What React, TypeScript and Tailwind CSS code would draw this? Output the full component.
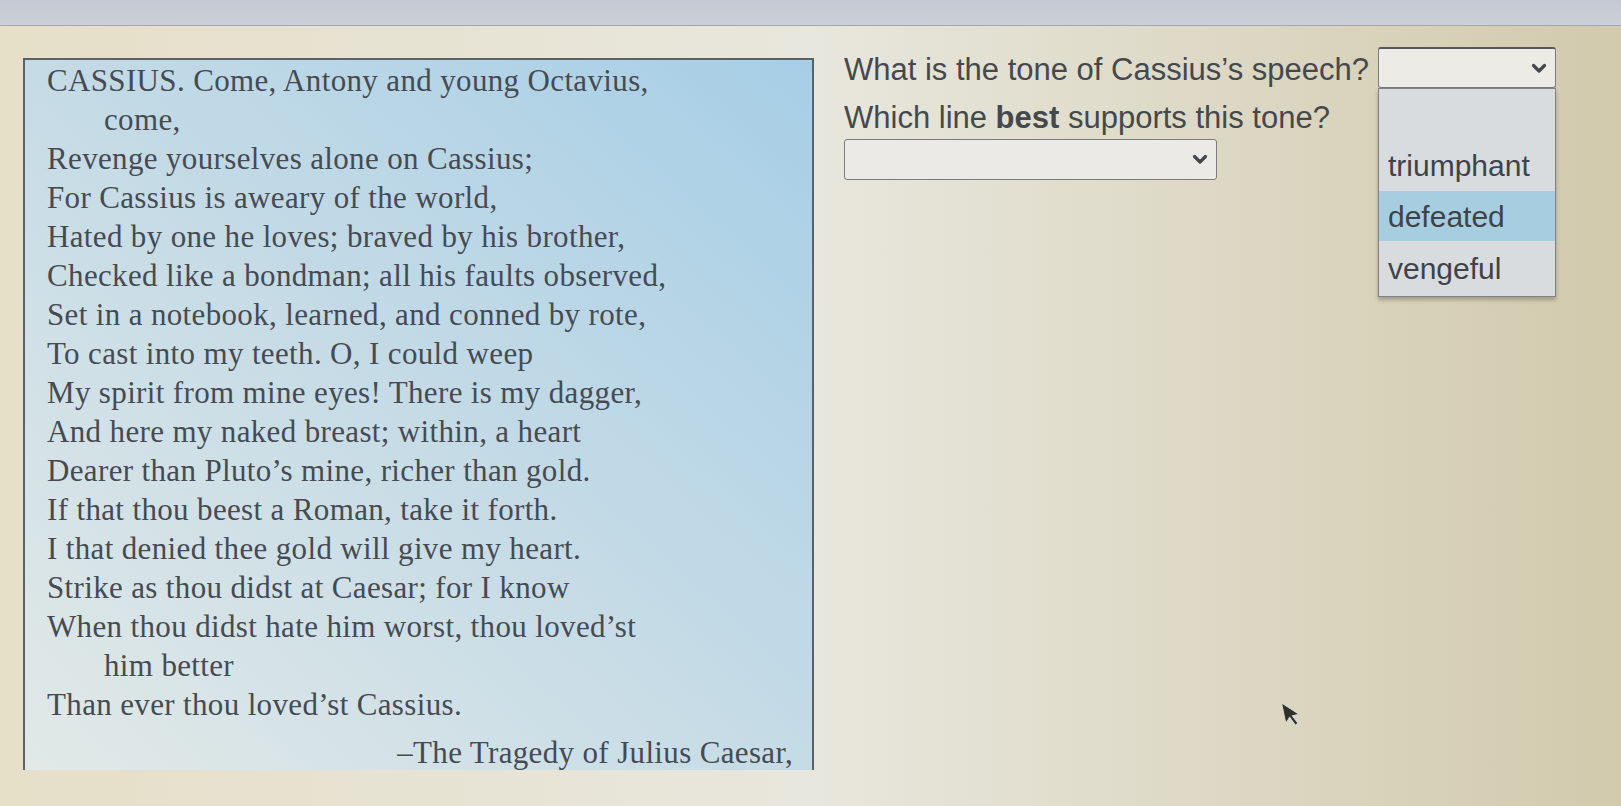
import React from "react";

const LINES: { text: string; indent?: boolean }[] = [
  { text: "CASSIUS. Come, Antony and young Octavius," },
  { text: "come,", indent: true },
  { text: "Revenge yourselves alone on Cassius;" },
  { text: "For Cassius is aweary of the world," },
  { text: "Hated by one he loves; braved by his brother," },
  { text: "Checked like a bondman; all his faults observed," },
  { text: "Set in a notebook, learned, and conned by rote," },
  { text: "To cast into my teeth. O, I could weep" },
  { text: "My spirit from mine eyes! There is my dagger," },
  { text: "And here my naked breast; within, a heart" },
  { text: "Dearer than Pluto’s mine, richer than gold." },
  { text: "If that thou beest a Roman, take it forth." },
  { text: "I that denied thee gold will give my heart." },
  { text: "Strike as thou didst at Caesar; for I know" },
  { text: "When thou didst hate him worst, thou loved’st" },
  { text: "him better", indent: true },
  { text: "Than ever thou loved’st Cassius." },
];

const OPTIONS = ["", "triumphant", "defeated", "vengeful"];

function Chevron() {
  return (
    <svg width="16" height="11" viewBox="0 0 16 11" fill="none">
      <path d="M2.5 2.5l5.5 5.5 5.5-5.5" stroke="#44474c" strokeWidth="3.2" strokeLinecap="round" strokeLinejoin="round" />
    </svg>
  );
}

export default function App() {
  return (
    <div className="relative w-[1621px] h-[806px] overflow-hidden flex flex-col bg-gradient-to-r from-[#e6dfc8] via-[#e8e7dd] to-[#d2caad]">
      {/* top browser strip */}
      <div className="h-[26px] shrink-0 bg-gradient-to-b from-[#c3c8d2] to-[#ccd0d8] border-b border-[#a3a7ad]" />

      <div className="flex items-start pl-[23px] pt-[32px]">
        {/* passage */}
        <div
          className="w-[791px] h-[712px] shrink-0 overflow-hidden border-2 border-b-0 border-[#5b6166] bg-gradient-to-tr from-[#e2e9e7] via-[#c5dbe6] to-[#a6cee6] pl-[22px] pr-[19px] pt-[1px] text-[#464b53] text-[31px] leading-[39px] tracking-[0.35px]"
          style={{ fontFamily: '"Liberation Serif", serif' }}
        >
          {LINES.map((l, i) => (
            <div key={i} className={l.indent ? "pl-[57px] whitespace-nowrap" : "whitespace-nowrap"}>
              {l.text}
            </div>
          ))}
          <div className="mt-[9px] text-right whitespace-nowrap">–The Tragedy of Julius Caesar,</div>
        </div>

        {/* questions */}
        <div
          className="ml-[30px] flex flex-col text-[#45484d] text-[31px]"
          style={{ fontFamily: '"Liberation Sans", Arial, sans-serif' }}
        >
          <div className="flex items-center mt-[-11px]">
            <span className="w-[534px] shrink-0 whitespace-nowrap leading-[36px] pt-[4px]">
              What is the tone of Cassius’s speech?
            </span>
            <div className="relative">
              <div className="w-[178px] h-[41px] rounded-[3px] border border-[#7a7c7f] border-t-2 border-t-[#55585b] bg-[#ecebe5] flex items-center justify-end pr-[8px]">
                <Chevron />
              </div>
              {/* open list */}
              <div className="absolute left-0 top-full w-[178px] border border-[#7f8388] bg-[#d8dcdf] shadow-[0_3px_4px_rgba(0,0,0,0.25)] text-[#3f4348] text-[30px]">
                {OPTIONS.map((o, i) => (
                  <div
                    key={i}
                    className={
                      o === "defeated"
                        ? "h-[50px] flex items-center pl-[9px] bg-[#a6cee0]"
                        : i === 3
                          ? "h-[55px] flex items-center pl-[9px]"
                          : "h-[51px] flex items-center pl-[9px]"
                    }
                  >
                    {o}
                  </div>
                ))}
              </div>
            </div>
          </div>

          <div className="mt-[12px] leading-[36px] whitespace-nowrap">
            Which line <b className="font-bold">best</b> supports this tone?
          </div>

          <div className="mt-[3px] w-[373px] h-[41px] rounded-[3px] border border-[#7a7c7f] bg-[#ebeae6] flex items-center justify-end pr-[8px]">
            <Chevron />
          </div>
        </div>
      </div>

      {/* mouse pointer */}
      <svg
        className="absolute left-[1282px] top-[700px] rotate-[-12deg]"
        width="18"
        height="28"
        viewBox="0 0 18 28"
      >
        <path d="M2 1v21l5-5 4 9 3-1.5-4-8.5h7z" fill="#2d302c" stroke="#dcdcd4" strokeWidth="1" />
      </svg>
    </div>
  );
}
